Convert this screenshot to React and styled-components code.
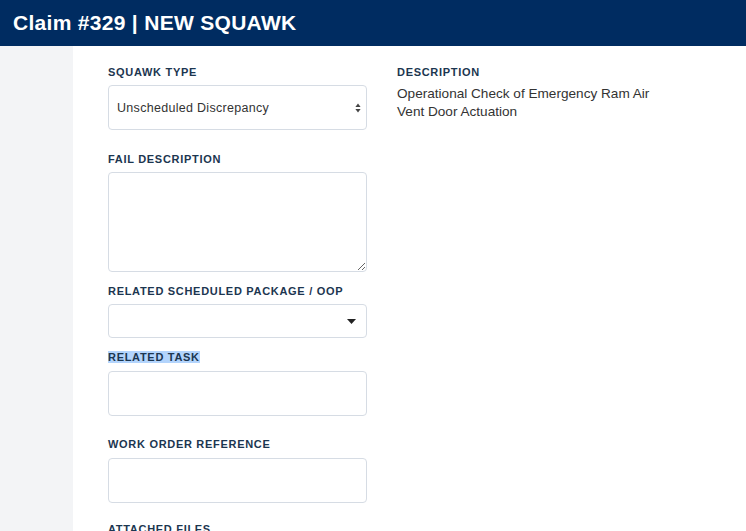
import React from "react";
import styled, { createGlobalStyle } from "styled-components";

const Global = createGlobalStyle`
  html, body { margin: 0; padding: 0; background: #ffffff; }
  body { font-family: "Liberation Sans", Arial, Helvetica, sans-serif; }
  * { box-sizing: border-box; }
`;

const Page = styled.div`
  display: flex;
  flex-direction: column;
  width: 746px;
  height: 531px;
  overflow: hidden;
`;

const Header = styled.header`
  height: 46px;
  flex: 0 0 46px;
  background: #002c61;
  display: flex;
  align-items: center;
  padding-left: 13px;
`;

const Title = styled.h1`
  margin: 0;
  color: #ffffff;
  font-size: 21px;
  font-weight: 700;
  letter-spacing: 0.3px;
`;

const Body = styled.div`
  display: flex;
  flex: 1;
`;

const Sidebar = styled.aside`
  width: 73px;
  flex: 0 0 73px;
  background: #f3f4f6;
`;

const Content = styled.main`
  flex: 1;
  display: grid;
  grid-template-columns: 259px 1fr;
  column-gap: 30px;
  align-items: start;
  padding: 20px 0 0 35px;
`;

const Column = styled.div`
  display: flex;
  flex-direction: column;
`;

const Group = styled.div`
  display: flex;
  flex-direction: column;
  margin-bottom: ${(p) => p.$gap ?? 24}px;
`;

const Label = styled.label`
  display: block;
  font-size: 11px;
  line-height: 13px;
  font-weight: 700;
  letter-spacing: 0.7px;
  color: #1c3650;
  text-transform: uppercase;
  margin-bottom: ${(p) => p.$mb ?? 6}px;
`;

const Selected = styled.span`
  background: #b3d4fc;
`;

const SelectBox = styled.div`
  height: ${(p) => p.$h}px;
  border: 1px solid #d6dce4;
  border-radius: 4px;
  background: #ffffff;
  display: flex;
  align-items: center;
  justify-content: space-between;
  padding: 0 ${(p) => p.$pr ?? 6}px 0 8px;
  font-size: 12.5px;
  letter-spacing: 0.3px;
  color: #333333;
`;

const TextArea = styled.textarea`
  display: block;
  width: 259px;
  height: 100px;
  border: 1px solid #d6dce4;
  border-radius: 4px;
  resize: vertical;
  padding: 8px;
  font-family: inherit;
  font-size: 13px;
  outline: none;
`;

const TextInput = styled.input`
  display: block;
  width: 259px;
  height: 45px;
  border: 1px solid #d6dce4;
  border-radius: 4px;
  padding: 0 8px;
  font-family: inherit;
  font-size: 13px;
  outline: none;
`;

const DescText = styled.p`
  margin: 0;
  width: 280px;
  font-size: 13.6px;
  line-height: 18px;
  color: #333333;
`;

const UpDown = () => (
  <svg width="6" height="10" viewBox="0 0 6 10">
    <path d="M3 0.5 L5.6 4 H0.4 Z" fill="#444" />
    <path d="M3 9.5 L5.6 6 H0.4 Z" fill="#444" />
  </svg>
);

const Caret = () => (
  <svg width="9" height="5" viewBox="0 0 9 5">
    <path d="M0 0 H9 L4.5 5 Z" fill="#222" />
  </svg>
);

export default function App() {
  return (
    <Page>
      <Global />
      <Header>
        <Title>Claim #329 | NEW SQUAWK</Title>
      </Header>
      <Body>
        <Sidebar />
        <Content>
          <Column>
            <Group $gap={23}>
              <Label>Squawk Type</Label>
              <SelectBox $h={45} $pr={5}>
                <span>Unscheduled Discrepancy</span>
                <UpDown />
              </SelectBox>
            </Group>
            <Group $gap={13}>
              <Label>Fail Description</Label>
              <TextArea />
            </Group>
            <Group $gap={13}>
              <Label>Related Scheduled Package / OOP</Label>
              <SelectBox $h={34} $pr={10}>
                <span />
                <Caret />
              </SelectBox>
            </Group>
            <Group $gap={22}>
              <Label $mb={7}>
                <Selected>Related Task</Selected>
              </Label>
              <TextInput />
            </Group>
            <Group $gap={20}>
              <Label $mb={7}>Work Order Reference</Label>
              <TextInput />
            </Group>
            <Group $gap={0}>
              <Label>Attached Files</Label>
            </Group>
          </Column>
          <Column>
            <Label $mb={6}>Description</Label>
            <DescText>
              Operational Check of Emergency Ram Air Vent Door Actuation
            </DescText>
          </Column>
        </Content>
      </Body>
    </Page>
  );
}
